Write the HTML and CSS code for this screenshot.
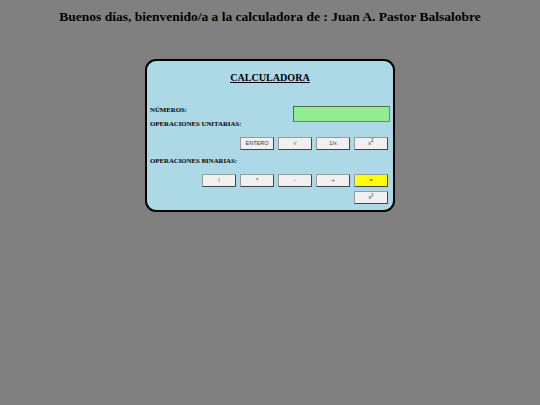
FILE: index.html
```html
<!DOCTYPE html>
<html lang="es">
<head>
  <meta charset="UTF-8" />
  <title>Calculadora</title>
  <link rel="stylesheet" href="styles.css">
</head>
<body>

<h1 class="greeting">Buenos días, bienvenido/a a la calculadora de : Juan A. Pastor Balsalobre</h1>

<div class="calculator">
  <h2 class="title">CALCULADORA</h2>

  <div class="display-row">
    <label class="label">NÚMEROS:</label>
    <input class="display" type="text">
  </div>

  <div class="label unary-label">OPERACIONES UNITARIAS:</div>
  <div class="buttons unary">
    <button>ENTERO</button>
    <button>√</button>
    <button>1/x</button>
    <button>x<sup>2</sup></button>
  </div>

  <div class="label binary-label">OPERACIONES BINARIAS:</div>
  <div class="buttons binary">
    <button>/</button>
    <button>*</button>
    <button>-</button>
    <button>+</button>
    <button class="equal">=</button>
  </div>
  <div class="buttons power">
    <button>x<sup>y</sup></button>
  </div>
</div>

</body>
</html>
```

FILE: styles.css
```css
body {
  margin: 0;
  height: 405px;
  overflow: hidden;
  background: #808080;
  font-family: "Liberation Serif", serif;
  color: #000;
}
.greeting {
  margin: 0;
  padding-top: 9px;
  font-size: 13.5px;
  line-height: 16px;
  text-align: center;
}
.calculator {
  box-sizing: border-box;
  width: 250px;
  height: 153px;
  margin: 34px 0 0 145px;
  padding: 0 3px;
  background: #add8e6;
  border: 2px solid #000;
  border-radius: 11px;
}
.title {
  margin: 0;
  padding-top: 10px;
  font-size: 10.1px;
  line-height: 13px;
  text-align: center;
  text-decoration: underline;
}
.label {
  font-size: 6.8px;
  line-height: 8px;
  font-weight: bold;
}
.display-row {
  display: flex;
  justify-content: space-between;
  align-items: flex-start;
  margin-top: 22px;
}
.display {
  box-sizing: border-box;
  width: 97px;
  height: 16px;
  padding: 0;
  background: #90ee90;
  border: 1px solid #5f8f6a;
  border-top-color: #4d6b52;
  border-left-color: #4d6b52;
}
.unary-label {
  margin-top: -2px;
}
.buttons {
  display: flex;
  justify-content: flex-end;
  gap: 4px;
  padding-right: 2px;
}
.unary {
  margin-top: 9px;
}
.binary-label {
  margin-top: 7px;
}
.binary {
  margin-top: 9px;
}
.power {
  margin-top: 4px;
}
button {
  box-sizing: border-box;
  width: 34px;
  height: 13px;
  padding: 0;
  background: #f0f0f0;
  border: 1px solid #444;
  border-top-color: #999;
  border-left-color: #999;
  border-radius: 1px;
  font-family: "Liberation Sans", sans-serif;
  font-size: 5.5px;
  line-height: 11px;
  color: #333;
}
button sup {
  font-size: 4.5px;
  line-height: 0;
}
.equal {
  background: #ffff00;
}
```
